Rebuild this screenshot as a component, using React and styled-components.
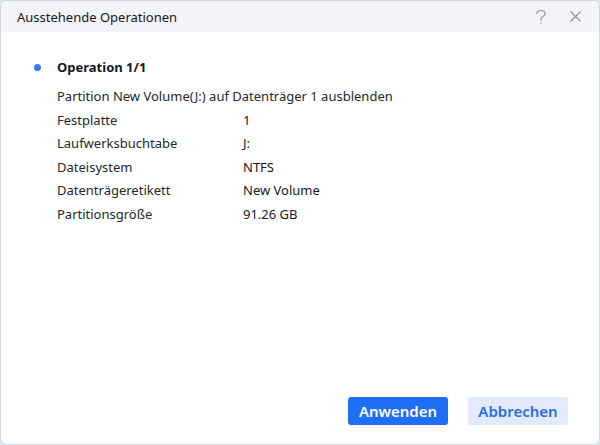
import React from 'react'
import styled, { createGlobalStyle } from 'styled-components'

const GlobalStyle = createGlobalStyle`
  html, body {
    margin: 0;
    padding: 0;
    background: #dfe3ea;
  }
  body {
    font-family: "Noto Sans", "Open Sans", sans-serif;
  }
`

const details = [
  { label: 'Festplatte', value: '1' },
  { label: 'Laufwerksbuchtabe', value: 'J:' },
  { label: 'Dateisystem', value: 'NTFS' },
  { label: 'Datenträgeretikett', value: 'New Volume' },
  { label: 'Partitionsgröße', value: '91.26 GB' },
]

const App = () => {
  return (
    <React.Fragment>
      <GlobalStyle />
      <Window>
        <TitleBar>
          <Title>Ausstehende Operationen</Title>
          <TitleActions>
            <TitleButton aria-label="Hilfe">
              <svg width="12" height="16" viewBox="0 0 12 16" fill="none" stroke="#8b9099" strokeWidth="1.1">
                <path d="M1.8 4.6C1.8 2.8 3.5 1.5 6 1.5s4.2 1.3 4.2 3.1c0 1.5-1 2.2-2.3 2.9C6.6 8.2 6 8.8 6 10.2v1" strokeLinecap="round" />
                <circle cx="6" cy="14" r="0.7" fill="#8b9099" stroke="none" />
              </svg>
            </TitleButton>
            <TitleButton aria-label="Schließen">
              <svg width="13" height="13" viewBox="0 0 13 13" fill="none" stroke="#8b9099" strokeWidth="1.1">
                <path d="M1.5 1.5l10 10M11.5 1.5l-10 10" />
              </svg>
            </TitleButton>
          </TitleActions>
        </TitleBar>
        <Body>
          <OperationHeader>
            <Bullet />
            <OperationTitle>Operation 1/1</OperationTitle>
          </OperationHeader>
          <DetailList>
            <Description>Partition New Volume(J:) auf Datenträger 1 ausblenden</Description>
            {details.map((d) => (
              <DetailRow key={d.label}>
                <Label>{d.label}</Label>
                <Value>{d.value}</Value>
              </DetailRow>
            ))}
          </DetailList>
        </Body>
        <Footer>
          <Button $primary>Anwenden</Button>
          <Button>Abbrechen</Button>
        </Footer>
      </Window>
    </React.Fragment>
  )
}

const Window = styled.div`
  display: flex;
  flex-direction: column;
  width: 600px;
  height: 445px;
  box-sizing: border-box;
  background: #ffffff;
  border: 1px solid #d3d7de;
  border-radius: 6px;
  overflow: hidden;
`

const TitleBar = styled.div`
  display: flex;
  align-items: center;
  justify-content: space-between;
  height: 31px;
  padding: 0 17px 0 16px;
  background: #f3f4f7;
  flex-shrink: 0;
`

const Title = styled.span`
  font-size: 13px;
  color: #16191e;
`

const TitleActions = styled.div`
  display: flex;
  align-items: center;
  gap: 22px;
`

const TitleButton = styled.div`
  display: flex;
  align-items: center;
  justify-content: center;
  height: 16px;
  cursor: pointer;
`

const Body = styled.div`
  flex: 1;
  padding: 24px 0 0 33px;
`

const OperationHeader = styled.div`
  display: flex;
  align-items: center;
  height: 22px;
`

const Bullet = styled.span`
  width: 7px;
  height: 7px;
  border-radius: 50%;
  background: #2f7bf5;
  margin-right: 16px;
`

const OperationTitle = styled.span`
  font-size: 13px;
  font-weight: 700;
  color: #15181d;
`

const DetailList = styled.div`
  display: flex;
  flex-direction: column;
  padding-left: 23px;
  margin-top: 7px;
`

const Description = styled.div`
  font-size: 13px;
  color: #23272e;
  height: 23.6px;
  line-height: 23.6px;
`

const DetailRow = styled.div`
  display: grid;
  grid-template-columns: 186px 1fr;
  height: 23.6px;
  line-height: 23.6px;
  font-size: 13px;
`

const Label = styled.span`
  color: #23272e;
`

const Value = styled.span`
  color: #15181d;
`

const Footer = styled.div`
  display: flex;
  justify-content: flex-end;
  gap: 20px;
  padding: 0 31px 19px 0;
`

const Button = styled.button`
  width: 100px;
  height: 28px;
  padding: 0;
  border: none;
  border-radius: 3px;
  font-family: "Noto Sans", "Open Sans", sans-serif;
  font-size: 15px;
  font-weight: 600;
  cursor: pointer;
  background: ${({ $primary }) => ($primary ? '#1e6ff5' : '#e2eafb')};
  color: ${({ $primary }) => ($primary ? '#ffffff' : '#2a6ae8')};
`

export default App
